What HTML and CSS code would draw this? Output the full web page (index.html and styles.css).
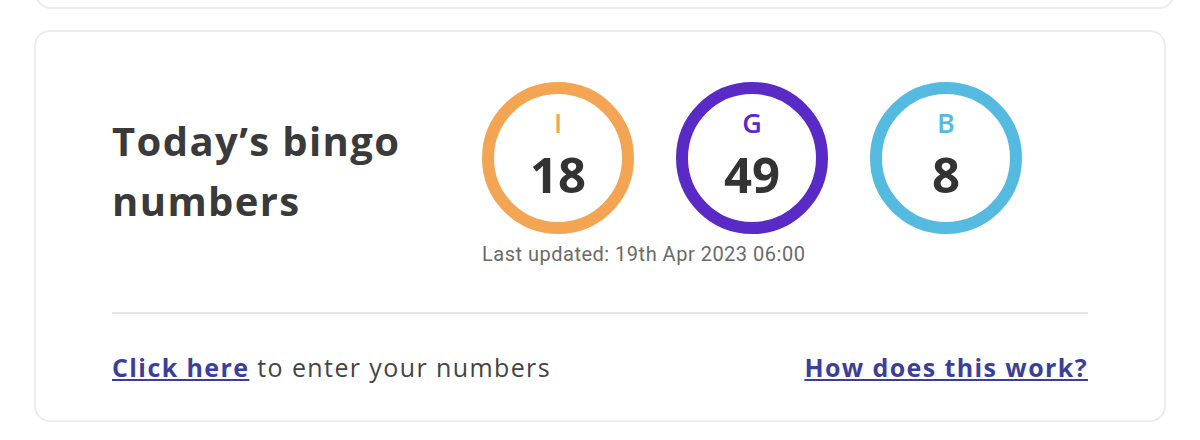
FILE: index.html
```html
<!DOCTYPE html>
<html lang="en">
<head>
    <meta charset="UTF-8">
    <meta name="viewport" content="width=device-width, initial-scale=1.0">
    <title>Today's bingo numbers</title>
    <link rel="stylesheet" href="styles.css">
</head>
<body>

<div class="card card-prev"></div>

<div class="card bingo">
    <div class="bingo-top">
        <h2 class="bingo-title">Today’s bingo numbers</h2>
        <div class="balls-wrap">
            <div class="balls">
                <div class="ball ball-orange">
                    <span class="ball-letter">I</span>
                    <span class="ball-number">18</span>
                </div>
                <div class="ball ball-purple">
                    <span class="ball-letter">G</span>
                    <span class="ball-number">49</span>
                </div>
                <div class="ball ball-blue">
                    <span class="ball-letter">B</span>
                    <span class="ball-number">8</span>
                </div>
            </div>
            <p class="updated">Last updated: 19th Apr 2023 06:00</p>
        </div>
    </div>

    <div class="bingo-footer">
        <p><a href="#">Click here</a> to enter your numbers</p>
        <a href="#">How does this work?</a>
    </div>
</div>

</body>
</html>
```

FILE: styles.css
```css
body {
    font-family: "Open Sans", "Lato", sans-serif;
    background-color: #fff;
    color: #333;
    margin: 0;
    padding: 0;
}
.card {
    background-color: white;
    border: 2px solid #ececec;
    border-radius: 16px;
    box-sizing: border-box;
}
.card-prev {
    height: 40px;
    margin: -31px 25px 21px 35px;
}
.bingo {
    width: 1132px;
    margin-left: 34px;
    padding: 50px 76px 36px;
}
.bingo-top {
    display: flex;
    align-items: center;
    padding-bottom: 48px;
    border-bottom: 2px solid #e4e4e4;
}
.bingo-title {
    width: 370px;
    margin: -4px 0 0;
    font-size: 40px;
    line-height: 60px;
    font-weight: 700;
    letter-spacing: 1.4px;
    color: #3a3a3a;
}
.balls {
    display: flex;
    gap: 42px;
}
.ball {
    width: 152px;
    height: 152px;
    padding-top: 10px;
    border: 12px solid;
    border-radius: 50%;
    box-sizing: border-box;
    display: flex;
    flex-direction: column;
    align-items: center;
}
.ball-letter {
    display: block;
    font-size: 27px;
    line-height: normal;
    font-weight: 600;
}
.ball-number {
    display: block;
    font-size: 49px;
    line-height: normal;
    font-weight: 700;
    color: #333;
}
.ball-orange {
    border-color: #f4a553;
    color: #f4a553;
}
.ball-purple {
    border-color: #5a2ac6;
    color: #5a2ac6;
}
.ball-blue {
    border-color: #55badf;
    color: #55badf;
}
.updated {
    margin: 10px 0 0;
    font-family: "Roboto", sans-serif;
    font-size: 20px;
    line-height: 20px;
    letter-spacing: 0.5px;
    color: #6a6a6a;
}
.bingo-footer {
    display: flex;
    justify-content: space-between;
    align-items: center;
    padding-top: 36px;
    font-size: 25px;
    letter-spacing: 1.4px;
    color: #444;
}
.bingo-footer p {
    margin: 0;
}
.bingo-footer a {
    color: #3b3f9a;
    font-weight: 700;
}
```
